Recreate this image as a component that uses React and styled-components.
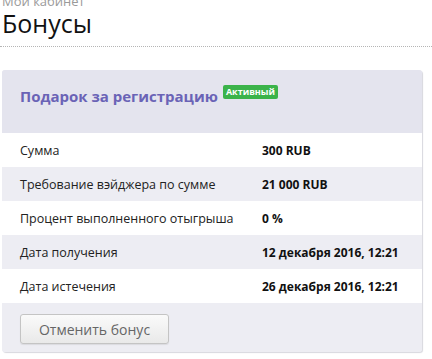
import React from "react";
import styled, { createGlobalStyle } from "styled-components";

const GlobalStyle = createGlobalStyle`
  html, body {
    margin: 0;
    padding: 0;
    background: #fff;
    font-family: "Open Sans", "Liberation Sans", sans-serif;
  }
`;

const rows = [
  ["Сумма", "300 RUB"],
  ["Требование вэйджера по сумме", "21 000 RUB"],
  ["Процент выполненного отыгрыша", "0 %"],
  ["Дата получения", "12 декабря 2016, 12:21"],
  ["Дата истечения", "26 декабря 2016, 12:21"],
];

const App = () => {
  return (
    <Page>
      <GlobalStyle />
      <PageHeader>
        <Breadcrumb>Мои кабинет</Breadcrumb>
        <Title>Бонусы</Title>
      </PageHeader>
      <Panel>
        <PanelHeader>
          <PanelTitle>Подарок за регистрацию</PanelTitle>
          <Badge>Активный</Badge>
        </PanelHeader>
        {rows.map(([label, value], i) => (
          <Row key={label} $striped={i % 2 === 1}>
            <Label>{label}</Label>
            <Value>{value}</Value>
          </Row>
        ))}
        <Footer>
          <CancelButton>Отменить бонус</CancelButton>
        </Footer>
      </Panel>
    </Page>
  );
};

export default App;

const Page = styled.div`
  width: 432px;
  height: 359px;
  overflow: hidden;
`;

const PageHeader = styled.div`
  padding: 0 2px 8px;
  border-bottom: 1px dotted #b5b5b5;
`;

const Breadcrumb = styled.div`
  margin-top: -6px;
  font-size: 13px;
  line-height: 14px;
  color: #9a9a9a;
`;

const Title = styled.h1`
  margin: 0;
  font-size: 25px;
  font-weight: 400;
  line-height: 30px;
  color: #111;
`;

const Panel = styled.div`
  margin: 23px 10px 0 2px;
  border-radius: 3px;
  overflow: hidden;
  box-shadow: 1px 1px 1px #d8d8de;
  background: #ededf3;
`;

const PanelHeader = styled.div`
  height: 63px;
  box-sizing: border-box;
  padding: 15px 18px 0;
  background: #e4e4ee;
  display: flex;
  align-items: flex-start;
  gap: 5px;
`;

const PanelTitle = styled.div`
  margin-top: 1px;
  font-size: 15px;
  line-height: 20px;
  font-weight: 700;
  color: #6a63b6;
`;

const Badge = styled.span`
  padding: 0 3px;
  height: 14px;
  line-height: 14px;
  font-size: 9px;
  font-weight: 700;
  color: #fff;
  background: #3bb34a;
  border-radius: 2px;
`;

const Row = styled.div`
  height: 34px;
  display: flex;
  align-items: center;
  padding: 0 18px;
  background: ${(p) => (p.$striped ? "#ededf3" : "#fff")};
  font-size: 12.5px;
  color: #222;
`;

const Label = styled.div`
  width: 242px;
  flex-shrink: 0;
`;

const Value = styled.div`
  font-size: 12px;
  font-weight: 700;
  white-space: nowrap;
  color: #111;
`;

const Footer = styled.div`
  height: 49px;
  box-sizing: border-box;
  padding: 11px 18px 0;
  background: #ededf3;
`;

const CancelButton = styled.button`
  width: 149px;
  height: 30px;
  font-family: "Open Sans", "Liberation Sans", sans-serif;
  font-size: 14px;
  color: #666;
  background: linear-gradient(#fafafa, #e9e9e9);
  border: 1px solid #c4c4c4;
  border-radius: 3px;
  box-shadow: 0 1px 1px rgba(0, 0, 0, 0.08);
`;
